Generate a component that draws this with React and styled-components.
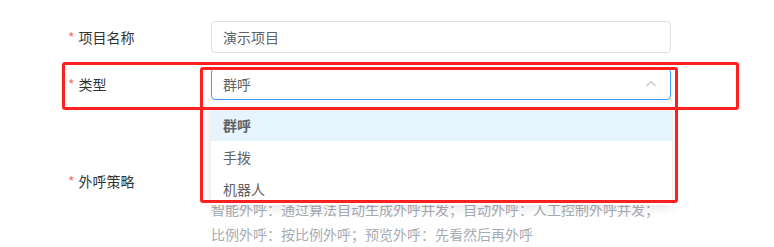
import React from "react";
import styled, { createGlobalStyle } from "styled-components";

const Global = createGlobalStyle`
  html, body { margin: 0; padding: 0; background: #fff; }
  body { font-family: "Noto Sans CJK SC", "Microsoft YaHei", sans-serif; }
  * { box-sizing: border-box; }
`;

const Page = styled.div`
  position: relative;
  width: 774px;
  height: 247px;
  overflow: hidden;
  background: #fff;
`;

const Form = styled.div`
  padding: 21px 0 0 68px;
  display: flex;
  flex-direction: column;
`;

const FormItem = styled.div`
  display: flex;
  align-items: flex-start;
  margin-bottom: ${(p) => p.$gap || 0}px;
`;

const Label = styled.div`
  width: 143px;
  flex: none;
  font-size: 14px;
  line-height: 32px;
  color: #333;
  white-space: nowrap;
`;

const Star = styled.span`
  color: #f56c6c;
  margin-right: 4px;
  font-size: 14px;
`;

const Control = styled.div`
  position: relative;
  width: 460px;
`;

const Input = styled.div`
  height: 32px;
  border: 1px solid ${(p) => (p.$focused ? "#409eff" : "#dcdfe6")};
  border-radius: 4px;
  padding: 0 11px;
  font-size: 14px;
  line-height: 30px;
  color: #606266;
  display: flex;
  align-items: center;
  justify-content: space-between;
  background: #fff;
`;

const Arrow = styled.svg`
  width: 12px;
  height: 12px;
  margin-right: 2px;
`;

const Dropdown = styled.ul`
  position: absolute;
  z-index: 5;
  top: 35px;
  left: 0;
  width: 461px;
  margin: 0;
  padding: 6px 0 0;
  list-style: none;
  background: #fff;
  border-radius: 3px;
  box-shadow: 0 2px 12px rgba(0, 0, 0, 0.12);
`;

const Option = styled.li`
  height: 32px;
  line-height: 32px;
  padding: 0 12px;
  font-size: 14px;
  color: #606266;
  font-weight: ${(p) => (p.$selected ? 700 : 400)};
  background: ${(p) => (p.$selected ? "#e6f4fe" : "#fff")};
`;

const RadioSlot = styled.div`
  height: 32px;
`;

const Hint = styled.div`
  font-size: 14px;
  line-height: 25px;
  color: #a8abb2;
  white-space: nowrap;
`;

const Mark = styled.div`
  position: absolute;
  z-index: 10;
  border: 3px solid #ff1f1f;
  border-radius: 3px;
  pointer-events: none;
`;

export default function App() {
  return (
    <Page>
      <Global />
      <Form>
        <FormItem $gap={15}>
          <Label>
            <Star>*</Star>项目名称
          </Label>
          <Control>
            <Input>演示项目</Input>
          </Control>
        </FormItem>
        <FormItem $gap={65}>
          <Label>
            <Star>*</Star>类型
          </Label>
          <Control>
            <Input $focused>
              群呼
              <Arrow viewBox="0 0 12 12">
                <polyline
                  points="1.5,8 6,3.5 10.5,8"
                  fill="none"
                  stroke="#c0c4cc"
                  strokeWidth="1.1"
                />
              </Arrow>
            </Input>
            <Dropdown>
              <Option $selected>群呼</Option>
              <Option>手拨</Option>
              <Option>机器人</Option>
            </Dropdown>
          </Control>
        </FormItem>
        <FormItem>
          <Label>
            <Star>*</Star>外呼策略
          </Label>
          <Control>
            <RadioSlot />
            <Hint>智能外呼：通过算法自动生成外呼并发；自动外呼：人工控制外呼并发；</Hint>
            <Hint>比例外呼：按比例外呼；预览外呼：先看然后再外呼</Hint>
          </Control>
        </FormItem>
      </Form>
      <Mark style={{ left: 62, top: 62, width: 677, height: 48 }} />
      <Mark style={{ left: 200, top: 67, width: 478, height: 136 }} />
    </Page>
  );
}
